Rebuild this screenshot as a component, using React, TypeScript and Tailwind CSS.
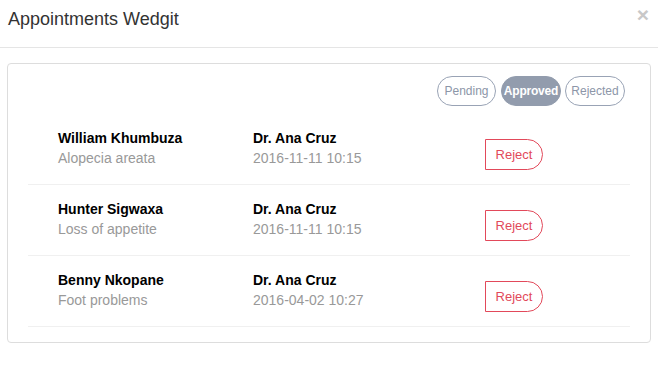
import React from "react";

const rows = [
  { name: "William Khumbuza", cond: "Alopecia areata", doc: "Dr. Ana Cruz", date: "2016-11-11 10:15" },
  { name: "Hunter Sigwaxa", cond: "Loss of appetite", doc: "Dr. Ana Cruz", date: "2016-11-11 10:15" },
  { name: "Benny Nkopane", cond: "Foot problems", doc: "Dr. Ana Cruz", date: "2016-04-02 10:27" },
];

export default function App() {
  return (
    <div className="w-[658px] h-[367px] bg-white relative font-['Liberation_Sans',Arial,sans-serif] text-[#333]">
      <div className="h-[48px] border-b border-[#e5e5e5] pl-[8px] pt-[6px]">
        <h4 className="text-[18px] leading-[26px] text-[#333]">Appointments Wedgit</h4>
      </div>
      <button className="absolute top-[3px] right-[9px] text-[21px] font-bold leading-[24px] text-[#c8c8c8]">×</button>
      <div className="ml-[7px] mr-[7px] mt-[15px] border border-[#dddddd] rounded-[4px] pt-[12px] pb-[15px] pl-[20px] pr-[20px]">
        <div className="flex justify-end pr-[5px]">
          <span className="h-[30px] w-[59px] flex items-center justify-center rounded-full border border-[#99a3b5] text-[12px] text-[#8c96a8]">Pending</span>
          <span className="ml-[5px] h-[30px] w-[60px] flex items-center justify-center rounded-full border border-[#929cad] bg-[#929cad] text-[12px] font-bold tracking-[-0.2px] text-white">Approved</span>
          <span className="ml-[4px] h-[30px] w-[60px] flex items-center justify-center rounded-full border border-[#99a3b5] text-[12px] text-[#8c96a8]">Rejected</span>
        </div>
        <div className="mt-[8px]">
          {rows.map((r, i) => (
            <div key={i} className="flex items-start h-[71px] border-b border-[#f0f0f0] pl-[30px] pt-[14px]">
              <div className="w-[195px]">
                <div className="text-[14px] leading-[20px] font-bold text-black">{r.name}</div>
                <div className="text-[14px] leading-[20px] text-[#999]">{r.cond}</div>
              </div>
              <div className="w-[232px]">
                <div className="text-[14px] leading-[20px] font-bold text-black">{r.doc}</div>
                <div className="text-[14px] leading-[20px] text-[#999]">{r.date}</div>
              </div>
              <button className="mt-[11px] h-[31px] w-[58px] border border-[#e2495a] rounded-r-full text-[13px] text-[#e2495a] flex items-center justify-center">Reject</button>
            </div>
          ))}
        </div>
      </div>
    </div>
  );
}
